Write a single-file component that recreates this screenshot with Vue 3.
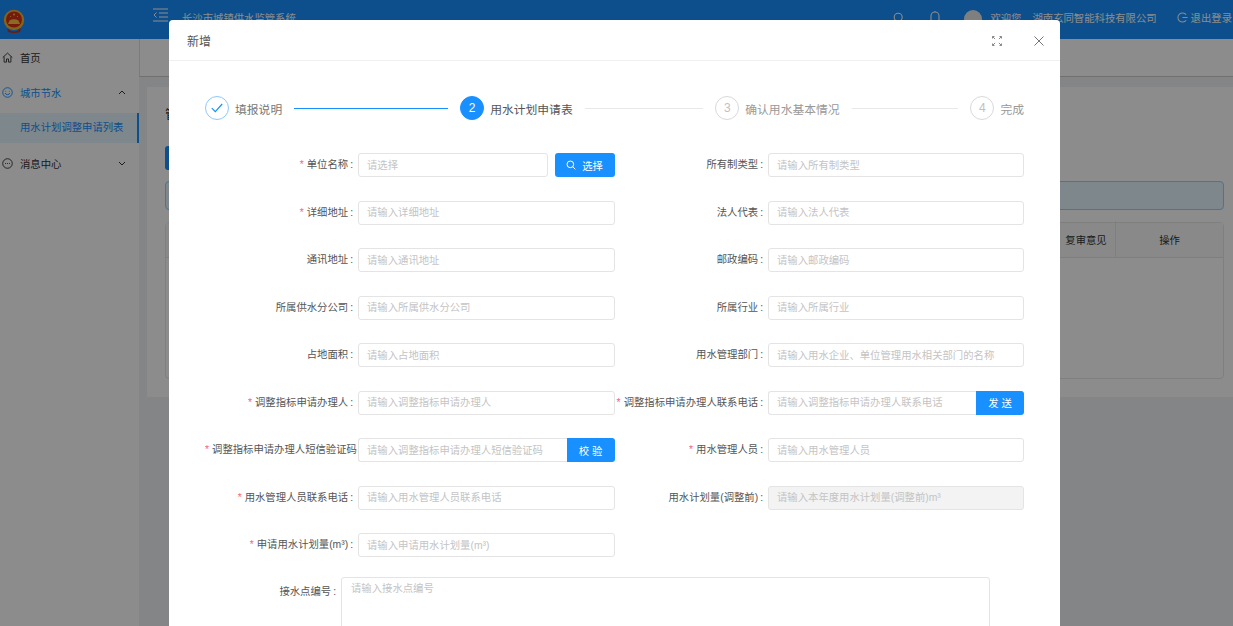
<template>
  <div class="page">
    <!-- Top bar -->
    <header class="topbar">
      <div class="logo-cell">
        <svg class="logo" width="22" height="24" viewBox="0 0 22 24">
          <path d="M4 19 Q11 26 18 19 L17 23 Q11 25 5 23Z" fill="#c8301c"/>
          <circle cx="11" cy="11" r="10.2" fill="#f5b52a"/>
          <circle cx="11" cy="10.5" r="8" fill="#d8301c"/>
          <path d="M5 15 L6.5 11.5 Q11 9 15.5 11.5 L17 15Z" fill="#f9c53a"/>
          <circle cx="11" cy="5.5" r="1" fill="#f9c53a"/>
          <circle cx="7.5" cy="7.5" r=".6" fill="#f9c53a"/>
          <circle cx="14.5" cy="7.5" r=".6" fill="#f9c53a"/>
        </svg>
      </div>
      <svg class="toggle" width="15" height="14" viewBox="0 0 15 14" fill="none" stroke="#fff" stroke-width="1.2">
        <path d="M0 1h15M6 5h9M6 9h9M0 13h15"/>
        <path d="M3.5 4.5 1 7l2.5 2.5" stroke-width="1"/>
      </svg>
      <span class="sys-title">长沙市城镇供水监管系统</span>
      <span class="top-spacer"></span>
      <svg class="top-search" width="12" height="12" viewBox="0 0 12 12" fill="none" stroke="#fff" stroke-width="1.1">
        <circle cx="5.2" cy="5.2" r="4"/><path d="m8.2 8.2 3 3"/>
      </svg>
      <svg class="top-bell" width="12" height="14" viewBox="0 0 12 14" fill="none" stroke="#fff" stroke-width="1.1">
        <path d="M2 11V5a4 4 0 0 1 8 0v6M1 11h10M6 1V0"/>
      </svg>
      <span class="avatar"></span>
      <span class="welcome">欢迎您</span>
      <span class="company">湖南玄同智能科技有限公司</span>
      <svg class="logout-icon" width="11" height="11" viewBox="0 0 12 12" fill="none" stroke="#fff" stroke-width="1.1">
        <path d="M10 3a5 5 0 1 0 0 6M6 6h5.5"/>
      </svg>
      <span class="logout">退出登录</span>
    </header>

    <div class="under">
      <!-- Side menu -->
      <aside class="sidebar">
        <div class="menu-item">
          <svg width="11" height="11" viewBox="0 0 12 12" fill="none" stroke="#333" stroke-width="1">
            <path d="M.8 6 6 1.2 11.2 6M2.3 5v6h2.6V7.6h2.2V11h2.6V5"/>
          </svg>
          <span>首页</span>
        </div>
        <div class="menu-item open">
          <svg width="11" height="11" viewBox="0 0 12 12" fill="none" stroke="#1890ff" stroke-width="1">
            <circle cx="6" cy="6" r="5.2"/><path d="M3.4 6.6a2.8 2.8 0 0 0 5.2 0M4 4.2v.8M8 4.2v.8"/>
          </svg>
          <span>城市节水</span>
          <svg class="chev" width="8" height="5" viewBox="0 0 8 5" fill="none" stroke="#333" stroke-width="1"><path d="M1 4l3-3 3 3"/></svg>
        </div>
        <div class="sub-item">用水计划调整申请列表</div>
        <div class="menu-item">
          <svg width="11" height="11" viewBox="0 0 12 12" fill="none" stroke="#333" stroke-width="1">
            <circle cx="6" cy="6" r="5.2"/><path d="M3.400 6h1M5.500 6h1M7.600 6h1"/>
          </svg>
          <span>消息中心</span>
          <svg class="chev" width="8" height="5" viewBox="0 0 8 5" fill="none" stroke="#333" stroke-width="1"><path d="M1 1l3 3 3-3"/></svg>
        </div>
      </aside>

      <!-- List page behind the dialog -->
      <main class="main">
        <div class="tabs"></div>
        <section class="card">
          <div class="card-title">管理列表</div>
          <button class="add-btn">新增</button>
          <div class="alert"></div>
          <div class="table">
            <div class="thead">
              <span class="th-rest"></span>
              <span class="th th-review">复审意见</span>
              <span class="th th-action">操作</span>
            </div>
          </div>
        </section>
      </main>
    </div>

    <div class="mask"></div>

    <!-- Dialog -->
    <div class="dialog">
      <div class="dialog-head">
        <span class="dialog-title">新增</span>
        <svg class="expand" width="10" height="10" viewBox="0 0 10 10" fill="none" stroke="#888" stroke-width="1">
          <path d="M.5 2.500V.5H2.500M.5.5l2.600 2.600M9.500 2.500V.5H7.500M9.500.5 6.900 3.100M.5 7.500v2H2.500M.5 9.500l2.600-2.600M9.500 7.500v2H7.500M9.500 9.500 6.900 6.900"/>
        </svg>
        <svg class="close" width="10" height="10" viewBox="0 0 10 10" fill="none" stroke="#777" stroke-width="1">
          <path d="m.5.500 9 9M9.500.5l-9 9"/>
        </svg>
      </div>

      <div class="dialog-body">
        <div class="steps">
          <div class="step" v-for="s in steps" :key="s.n" :class="s.state">
            <span class="step-icon">
              <svg v-if="s.state === 'done'" width="12" height="10" viewBox="0 0 12 10" fill="none" stroke="#1890ff" stroke-width="1.2"><path d="M.8 5.200 4.300 8.700 11.200 1"/></svg>
              <template v-else>{{ s.n }}</template>
            </span>
            <span class="step-title">{{ s.title }}</span>
            <span class="step-line"></span>
          </div>
        </div>

        <div class="form-grid">
          <div class="form-item" v-for="f in fields" :key="f.label" :class="{ blank: f.blank }">
            <template v-if="!f.blank">
              <label class="form-label"><i v-if="f.req" class="star">*</i>{{ f.label }}<span class="colon">:</span></label>
              <div class="control">
                <input class="input" :class="{ 'has-addon': f.addon }" :placeholder="f.ph" :disabled="f.disabled" />
                <button v-if="f.addon" class="addon">{{ f.addon }}</button>
                <button v-if="f.pick" class="pick-btn">
                  <svg width="10" height="10" viewBox="0 0 12 12" fill="none" stroke="#fff" stroke-width="1.2"><circle cx="5.200" cy="5.200" r="4"/><path d="m8.200 8.200 3 3"/></svg>
                  选择
                </button>
              </div>
            </template>
          </div>
        </div>

        <div class="area-row">
          <label class="area-label">接水点编号<span class="colon">:</span></label>
          <textarea class="area" placeholder="请输入接水点编号"></textarea>
        </div>
      </div>
    </div>
  </div>
</template>

<script setup>
const steps = [
  { n: 1, title: '填报说明', state: 'done' },
  { n: 2, title: '用水计划申请表', state: 'active' },
  { n: 3, title: '确认用水基本情况', state: 'wait' },
  { n: 4, title: '完成', state: 'wait' },
]

const fields = [
  { label: '单位名称', req: true, ph: '请选择', pick: true },
  { label: '所有制类型', ph: '请输入所有制类型' },
  { label: '详细地址', req: true, ph: '请输入详细地址' },
  { label: '法人代表', ph: '请输入法人代表' },
  { label: '通讯地址', ph: '请输入通讯地址' },
  { label: '邮政编码', ph: '请输入邮政编码' },
  { label: '所属供水分公司', ph: '请输入所属供水分公司' },
  { label: '所属行业', ph: '请输入所属行业' },
  { label: '占地面积', ph: '请输入占地面积' },
  { label: '用水管理部门', ph: '请输入用水企业、单位管理用水相关部门的名称' },
  { label: '调整指标申请办理人', req: true, ph: '请输入调整指标申请办理人' },
  { label: '调整指标申请办理人联系电话', req: true, ph: '请输入调整指标申请办理人联系电话', addon: '发 送' },
  { label: '调整指标申请办理人短信验证码', req: true, ph: '请输入调整指标申请办理人短信验证码', addon: '校 验' },
  { label: '用水管理人员', req: true, ph: '请输入用水管理人员' },
  { label: '用水管理人员联系电话', req: true, ph: '请输入用水管理人员联系电话' },
  { label: '用水计划量(调整前)', ph: '请输入本年度用水计划量(调整前)m³', disabled: true },
  { label: '申请用水计划量(m³)', req: true, ph: '请输入申请用水计划量(m³)' },
  { label: 'blank', blank: true },
]
</script>

<style>
html, body { margin: 0; height: 100%; overflow: hidden; }
</style>

<style scoped>
.page {
  position: relative;
  width: 100%;
  height: 100vh;
  overflow: hidden;
  background: #f0f2f5;
  font-family: "Liberation Sans", "Noto Sans CJK SC", sans-serif;
  font-size: 10.35px;
  color: #333;
}

.topbar {
  height: 39px;
  display: flex;
  align-items: center;
  background: #1890ff;
  color: #fff;
  padding-bottom: 4px;
  box-sizing: border-box;
}
.logo-cell { width: 153px; flex-shrink: 0; padding-left: 3px; box-sizing: border-box; display: flex; }
.logo { margin-top: 6px; }
.toggle { margin-top: -6px; }
.sys-title { margin-left: 14px; }
.top-spacer { flex: 1; }
.top-search { margin-right: 24px; }
.top-bell { margin-right: 23px; }
.avatar { width: 18px; height: 18px; border-radius: 50%; background: #e8e8e8; margin: 3px 8px 0 0; }
.welcome { margin-right: 11px; }
.company { margin-right: 20px; }
.logout-icon { margin-right: 3px; }
.logout { margin-right: 1px; }

.under { display: flex; height: calc(100vh - 39px); }
.sidebar { width: 139px; flex-shrink: 0; background: #fff; padding-top: 1px; box-sizing: border-box; }
.menu-item {
  height: 35px;
  display: flex;
  align-items: center;
  gap: 7px;
  padding-left: 2px;
  position: relative;
}
.menu-item.open { color: #1890ff; }
.chev { position: absolute; left: 118px; top: 15px; }
.sub-item {
  height: 30px;
  line-height: 30px;
  margin-top: 3px;
  margin-bottom: 3px;
  padding-left: 20px;
  color: #1890ff;
  background: #e6f7ff;
  border-right: 2px solid #1890ff;
}

.main { flex: 1; min-width: 0; }
.tabs { height: 38px; background: #fff; box-sizing: border-box; border-left: 1px solid #e0e0e0; border-bottom: 1px solid #ccc; }
.card {
  margin: 10px 0 0 8px;
  height: 310px;
  background: #fff;
  padding: 18px 9px 0 18px;
  box-sizing: border-box;
}
.card-title { height: 20px; line-height: 20px; font-size: 12px; color: #333; }
.add-btn { display: block; width: 60px; height: 24px; margin-top: 21px; border: 0; border-radius: 3px; background: #1890ff; color: #fff; font-size: 10.35px; font-family: inherit; }
.alert { height: 29px; margin-top: 11px; background: #e6f7ff; border: 1px solid #91d5ff; border-radius: 4px; box-sizing: border-box; }
.table { height: 157px; margin-top: 12px; border: 1px solid #e8e8e8; border-radius: 4px; box-sizing: border-box; }
.thead { height: 34px; display: flex; background: #fafafa; border-bottom: 1px solid #e8e8e8; color: #333; }
.th-rest { flex: 1; }
.th { display: flex; align-items: center; justify-content: center; margin-top: -2px; }
.th-review { width: 58px; border-right: 1px solid #e8e8e8; }
.th-action { width: 107px; }

.mask { position: absolute; inset: 0; background: rgba(0, 0, 0, 0.45); }

.dialog {
  position: absolute;
  left: 169px;
  top: 20px;
  width: 891px;
  height: 760px;
  background: #fff;
  border-radius: 4px;
}
.dialog-head {
  height: 41px;
  box-sizing: border-box;
  border-bottom: 1px solid #f0f0f0;
  display: flex;
  align-items: center;
  padding-left: 18px;
  position: relative;
}
.dialog-title { font-size: 12px; color: #555; }
.expand { position: absolute; left: 823px; top: 16px; }
.close { position: absolute; left: 865px; top: 16px; }

.dialog-body { padding: 35px 36px 0; }
.steps { display: flex; }
.step { flex: 1; display: flex; align-items: center; min-width: 0; }
.step:last-child { flex: none; }
.step:last-child .step-line { display: none; }
.step-icon {
  width: 24px;
  height: 24px;
  box-sizing: border-box;
  border-radius: 50%;
  border: 1px solid #d9d9d9;
  display: flex;
  align-items: center;
  justify-content: center;
  font-size: 12px;
  color: #bfbfbf;
  flex-shrink: 0;
}
.step-title { margin: 0 12px 0 6px; font-size: 11.8px; color: #999; white-space: nowrap; }
.step:last-child .step-title { margin-right: 0; }
.step-line { flex: 1; height: 1px; background: #e8e8e8; margin-right: 12px; }
.step.done .step-icon { border-color: #8cc8ff; }
.step.done .step-title { color: #777; }
.step.done .step-line { background: #1890ff; }
.step.active .step-icon { background: #1890ff; border-color: #1890ff; color: #fff; }
.step.active .step-title { color: #555; }

.form-grid {
  margin-top: 33px;
  display: grid;
  grid-template-columns: 409.5px 409.5px;
  grid-auto-rows: 24px;
  row-gap: 23.5px;
}
.form-item { display: flex; min-width: 0; }
.form-label {
  width: 153px;
  flex-shrink: 0;
  line-height: 24px;
  text-align: right;
  white-space: nowrap;
  overflow: hidden;
  color: #555;
}
.form-item:nth-child(even) .form-label { width: 153.5px; }
.star { font-style: normal; color: #f5222d; margin-right: 3px; opacity: .7; }
.colon { margin: 0 5px 0 2px; }
.control { flex: 1; min-width: 0; display: flex; }
.input {
  flex: 1;
  min-width: 0;
  width: 100%;
  height: 24px;
  box-sizing: border-box;
  border: 1px solid #e4e4e4;
  border-radius: 3px;
  padding: 0 8px;
  background: #fff;
  outline: none;
  font-size: 10.35px;
  font-family: inherit;
  color: #333;
}
.input::placeholder, .area::placeholder { color: #c4c4c4; opacity: 1; }
.input:disabled { background: #f3f3f3; }
.input.has-addon { border-radius: 3px 0 0 3px; border-right: 0; }
.addon {
  width: 48px;
  height: 24px;
  flex-shrink: 0;
  border: 0;
  border-radius: 0 3px 3px 0;
  background: #1890ff;
  color: #fff;
  font-size: 10.35px;
  font-family: inherit;
  padding: 0;
}
.pick-btn {
  width: 60px;
  height: 24px;
  flex-shrink: 0;
  margin-left: 7px;
  border: 0;
  border-radius: 3px;
  background: #1890ff;
  color: #fff;
  font-size: 10.35px;
  font-family: inherit;
  padding: 0;
  display: flex;
  align-items: center;
  justify-content: center;
  gap: 6px;
}

.area-row { display: flex; margin-top: 19.5px; }
.area-label { width: 136px; flex-shrink: 0; text-align: right; line-height: 30px; color: #555; white-space: nowrap; }
.area-label .colon { margin-right: 5px; }
.area {
  width: 649px;
  height: 90px;
  box-sizing: border-box;
  border: 1px solid #e4e4e4;
  border-radius: 3px;
  padding: 3px 9px;
  outline: none;
  resize: none;
  font-size: 10.35px;
  line-height: 16px;
  font-family: inherit;
}
</style>
